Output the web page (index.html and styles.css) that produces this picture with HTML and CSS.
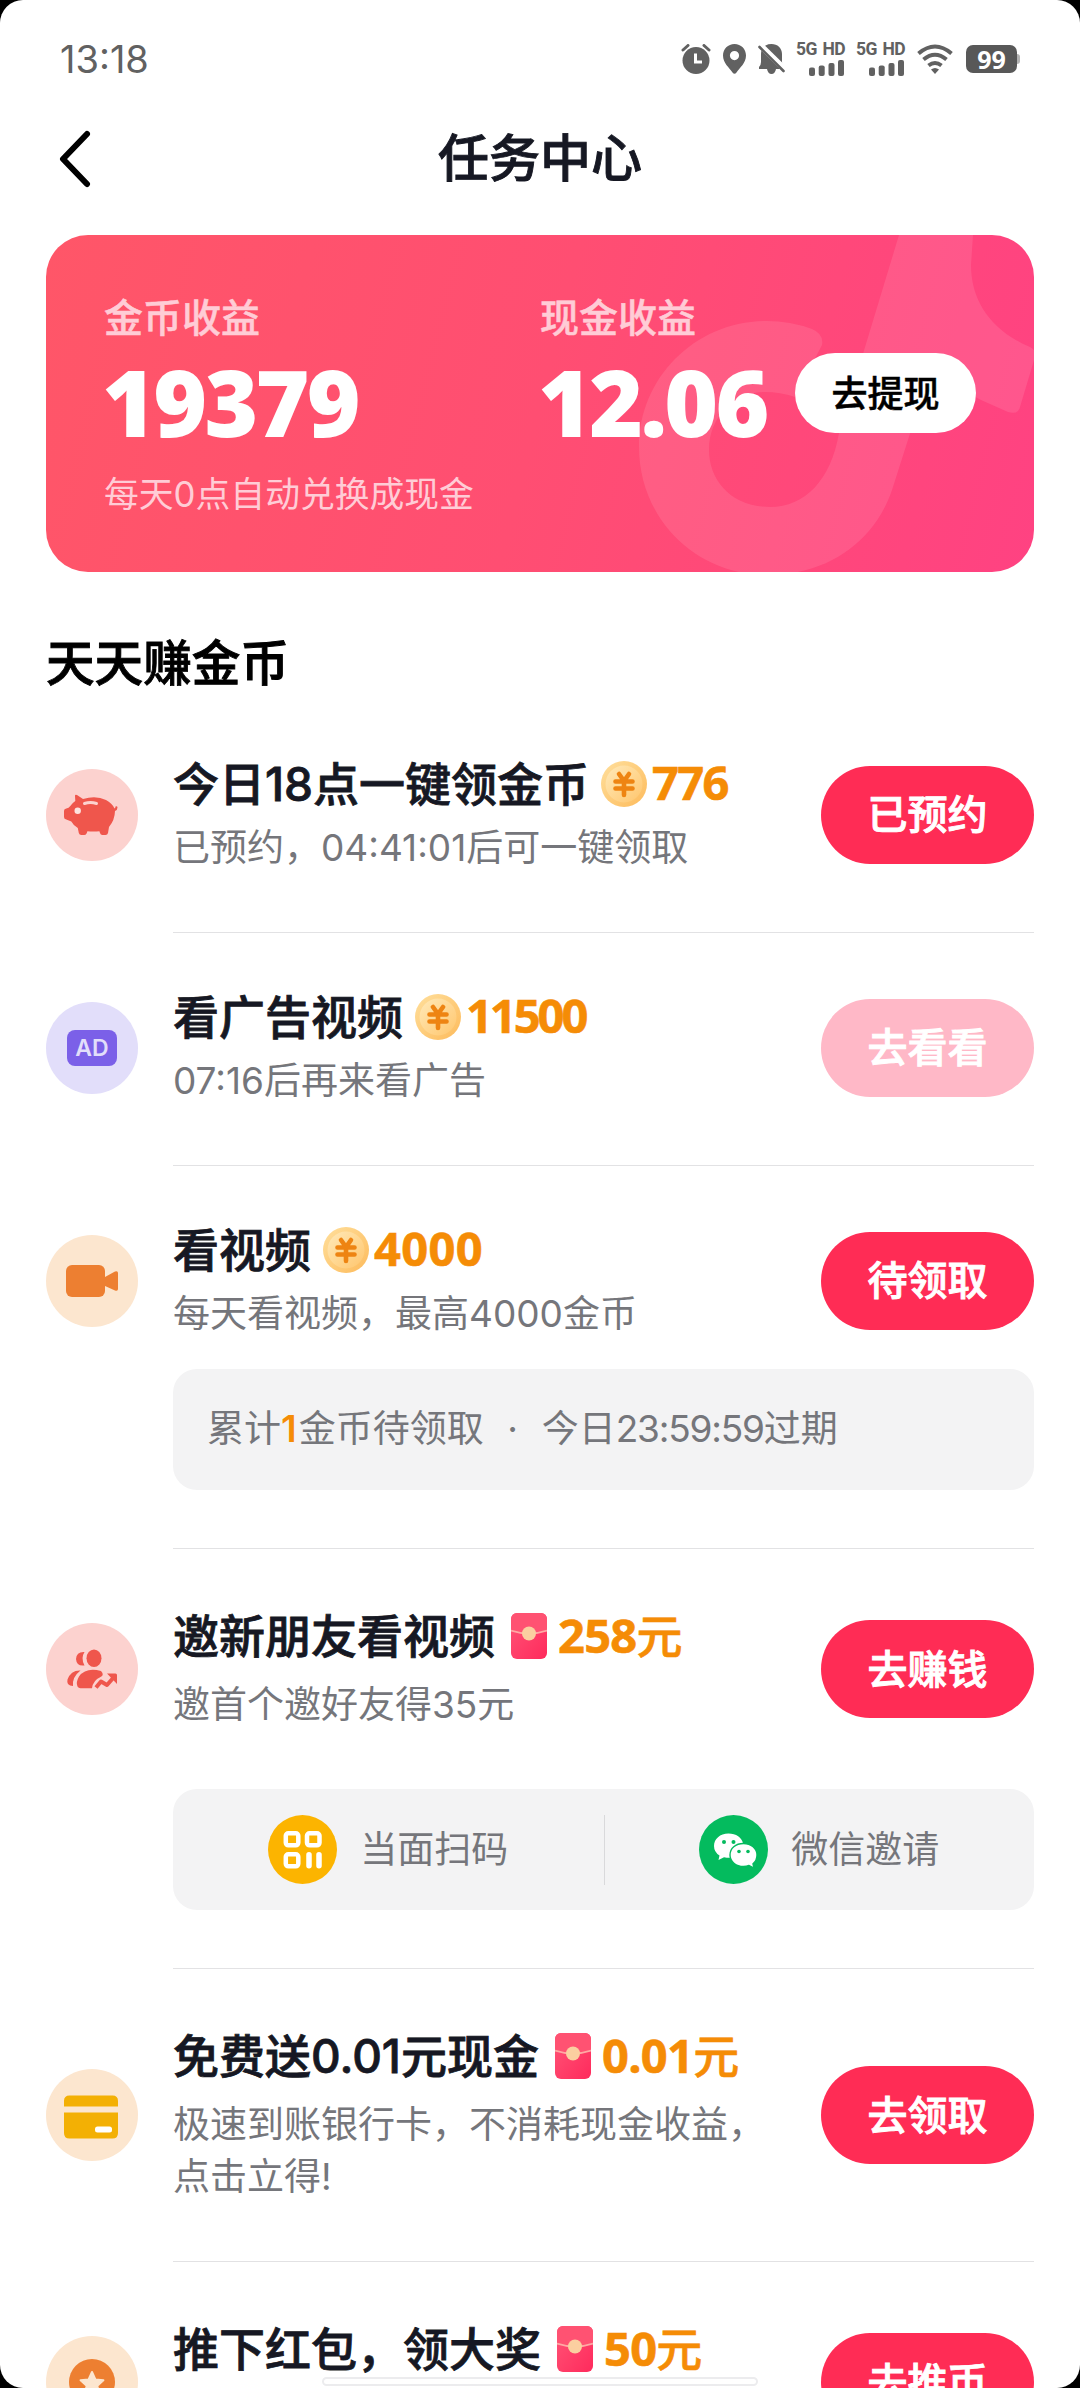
FILE: index.html
```html
<!DOCTYPE html>
<html lang="zh-CN">
<head>
<meta charset="utf-8">
<title>任务中心</title>
<link rel="stylesheet" href="styles.css">
</head>
<body>
<svg class="defs" width="0" height="0" aria-hidden="true">
  <defs>
    <linearGradient id="coinRim" x1="0" y1="0" x2="1" y2="1"><stop offset="0" stop-color="#ffdf9c"/><stop offset="1" stop-color="#fdbb5c"/></linearGradient>
    <linearGradient id="coinFace" x1="0" y1="0" x2="1" y2="1"><stop offset="0" stop-color="#ffe9b8"/><stop offset="1" stop-color="#ffc66d"/></linearGradient>
    <linearGradient id="packetBody" x1="0" y1="0" x2="1" y2="1"><stop offset="0" stop-color="#ff5577"/><stop offset="1" stop-color="#ff2a5c"/></linearGradient>
  </defs>
  <symbol id="coin" viewBox="0 0 46 46">
    <circle cx="23" cy="23" r="23" fill="url(#coinRim)"/>
    <circle cx="23" cy="23" r="18.500" fill="url(#coinFace)"/>
    <path d="M18 13l5 7 5-7M14.500 20.500h17M14.500 27.500h17M23 20v14" fill="none" stroke="#ee8412" stroke-width="4.600" stroke-linecap="round" stroke-linejoin="round"/>
  </symbol>
  <symbol id="packet" viewBox="0 0 36 46">
    <rect width="36" height="46" rx="6" fill="url(#packetBody)"/>
    <path d="M0 17Q18 24 36 17V6a6 6 0 0 0-6-6H6a6 6 0 0 0-6 6z" fill="#ff5272"/>
    <path d="M0 17.500Q18 23.500 36 17.500" fill="none" stroke="#ffa9a4" stroke-width="1.800"/>
    <circle cx="18" cy="20.500" r="7" fill="#fbcfa0"/>
  </symbol>
  <symbol id="signal" viewBox="0 0 36 16">
    <rect y="7.500" width="6" height="8.500" rx="2"/><rect x="9.700" y="5.500" width="6" height="10.500" rx="2"/><rect x="19.500" y="3" width="6" height="13" rx="2"/><rect x="29" width="6" height="16" rx="2"/>
  </symbol>
</svg>

<div class="screen">
  <div class="statusbar">
    <span class="clock">13:18</span>
    <div class="indicators">
      <svg class="ind-alarm" width="30" height="30" viewBox="0 0 30 30"><circle cx="15" cy="16.500" r="13.500" fill="#616161"/><path d="M2 6l5-4.500M28 6l-5-4.500" stroke="#616161" stroke-width="3" stroke-linecap="round"/><path d="M14.500 9.500v8.500h6.500" fill="none" stroke="#fff" stroke-width="3"/></svg>
      <svg class="ind-pin" width="23" height="30" viewBox="0 0 23 30"><path fill="#616161" fill-rule="evenodd" d="M11.500 0C5 0 0 5 0 11.500 0 19 6.500 24 9.500 28.500q2 2.600 4 0C16.500 24 23 19 23 11.500 23 5 18 0 11.500 0zm0 7a4.600 4.600 0 1 1 0 9.200 4.600 4.600 0 0 1 0-9.200z"/></svg>
      <svg class="ind-bell" width="27" height="30" viewBox="0 0 27 30"><path fill="#616161" d="M13.500 0C19.500 0 24 4 24 10v8q0 3 2 5v2H18q-1 5-4.500 5T9 25H1v-2q2-2 2-5v-8C3 4 7 0 13.500 0z"/><path d="M1 0l27 26.500" stroke="#fff" stroke-width="6"/><path d="M1.500 3l24 24" stroke="#616161" stroke-width="2.600" stroke-linecap="round"/></svg>
      <div class="network"><span>5G HD</span><svg width="36" height="16" fill="#616161"><use href="#signal"/></svg></div>
      <div class="network"><span>5G HD</span><svg width="36" height="16" fill="#616161"><use href="#signal"/></svg></div>
      <svg class="ind-wifi" width="36" height="30" viewBox="0 0 36 30"><g fill="none" stroke="#616161" stroke-width="4"><path d="M1.500 9.500q16.500-14 33 0"/><path d="M6.500 15.500q11.500-9.500 23 0"/><path d="M11.500 21.500q6.500-5 13 0"/></g><path fill="#616161" d="M14 25.500q4-3 8 0L18 30z"/></svg>
      <div class="battery">99</div>
    </div>
  </div>

  <header class="navbar">
    <svg class="back" width="32" height="58" viewBox="0 0 32 58"><path d="M28 4L4 29l24 25" fill="none" stroke="#000" stroke-width="6" stroke-linecap="round" stroke-linejoin="round"/></svg>
    <h1>任务中心</h1>
  </header>

  <section class="wallet">
    <svg class="watermark" viewBox="46 235 988 337"><path fill="#fff" fill-opacity=".1" d="M899 235L839 433C831 480 805 507 770 507 731 507 709 480 709 450 709 416 735 392 765 392Q780 392 795 397L822 345Q824 334 812 329 790 321 767 321C695 321 639 378 639 447 639 518 695 575 767 575 830 575 875 540 892 490L935 355Q950 385 981 400L1008 412Q1018 415 1020 407L1035 357Q1037 351 1030 347C990 330 971 300 971 265L973 235z"/></svg>
    <div class="balance coins">
      <span class="label">金币收益</span>
      <strong>19379</strong>
      <span class="hint">每天0点自动兑换成现金</span>
    </div>
    <div class="balance cash">
      <span class="label">现金收益</span>
      <strong>12.06</strong>
    </div>
    <button class="withdraw">去提现</button>
  </section>

  <h2>天天赚金币</h2>

  <main class="tasks">
    <article class="task">
      <svg class="icon" viewBox="0 0 92 92"><circle cx="46" cy="46" r="46" fill="#fcd2cf"/><path fill="#ef564c" d="M29 27q0-2 2-1l6 4q13-4 23 1 6 3 8.500 8.500 1-.5 1-2 1.800-.8 2 1 0 2.500-2.500 3.500-.2 9-6 16l-1 6q-.5 2-2.500 2h-3q-2 0-2.500-2l-.6-1.800q-6 .8-12 0l-.6 1.800q-.5 2-2.500 2h-3q-2 0-2.500-2l-1-5q-4-2-6.500-6.500l-5-2q-2.300-.5-2.300-2.500v-6q0-2.500 2.300-2.500 2.500-.5 4-2.500 2-3 5-5z"/><circle cx="31.700" cy="41.700" r="3.200" fill="#fde3df"/><path d="M38.500 34.500q6-2 12 0" fill="none" stroke="#fcd2cf" stroke-width="3" stroke-linecap="round"/></svg>
      <div class="info">
        <h3>今日18点一键领金币<svg class="coin"><use href="#coin"/></svg><b class="snug">776</b></h3>
        <p>已预约，04:41:01后可一键领取</p>
      </div>
      <button>已预约</button>
      <div class="rule"></div>
    </article>

    <article class="task">
      <div class="icon ad"><span>AD</span></div>
      <div class="info">
        <h3>看广告视频<svg class="coin"><use href="#coin"/></svg><b class="tight">11500</b></h3>
        <p>07:16后再来看广告</p>
      </div>
      <button class="muted">去看看</button>
      <div class="rule"></div>
    </article>

    <article class="task">
      <svg class="icon" viewBox="0 0 92 92"><circle cx="46" cy="46" r="46" fill="#fce6cf"/><rect x="20" y="30" width="39" height="32" rx="6" fill="#ed7f31"/><path fill="#ed7f31" d="M59 42l10-5.500q3-1 3 1.500v16q0 2.500-3 1.500L59 51z"/></svg>
      <div class="info">
        <h3>看视频<svg class="coin"><use href="#coin"/></svg><b class="wide">4000</b></h3>
        <p>每天看视频，最高4000金币</p>
      </div>
      <button>待领取</button>
      <div class="panel notice">累计<em>1</em>金币待领取<i>·</i>今日<span>23:59:59</span>过期</div>
      <div class="rule"></div>
    </article>

    <article class="task roomy">
      <svg class="icon" viewBox="0 0 92 92"><circle cx="46" cy="46" r="46" fill="#fcd2cf"/><g fill="#ef564c"><ellipse cx="48" cy="35.300" rx="7.500" ry="8.800"/><path d="M38.500 29q-4 6 0 13.500Q30.500 43.500 30 36 30.500 28.500 38.500 29z"/><path d="M34.500 47.500Q25 47 21.500 56.500q-1.500 6.500 5.500 6.500-1-9 7.500-15.500z"/><path d="M55 48Q40 44 33 53.500q-3.500 6-1.500 10 1 1.800 3 1.800H46q1-8 9-11.500 3.500-2 0-5.800z"/><path d="M50 64.500l5-6 6 3.500 7-8" fill="none" stroke="#ef564c" stroke-width="4" stroke-linejoin="round"/><path d="M61 50.500h8.500q1.500 0 1.500 1.500v9z"/></g></svg>
      <div class="info">
        <h3>邀新朋友看视频<svg class="packet"><use href="#packet"/></svg><b>258<span>元</span></b></h3>
        <p>邀首个邀好友得35元</p>
      </div>
      <button>去赚钱</button>
      <div class="panel share">
        <a><svg viewBox="0 0 69 69"><circle cx="34.500" cy="34.500" r="34.500" fill="#fcb400"/><g fill="none" stroke="#fff" stroke-width="4.500"><rect x="17.800" y="18.300" width="12.500" height="12" rx="2.500"/><rect x="39" y="18.300" width="12.500" height="12" rx="2.500"/><rect x="17.800" y="39.300" width="12.500" height="12" rx="2.500"/></g><path d="M41 39.800v11M51 39.800v11" stroke="#fff" stroke-width="5.500" stroke-linecap="round"/></svg>当面扫码</a>
        <a><svg viewBox="0 0 69 69"><circle cx="34.500" cy="34.500" r="34.500" fill="#04bb5e"/><path fill="#fff" d="M29.500 18.500C21 18.500 15 24 15 31q0 6 5.500 9.500L19.500 45l5.500-2.800q5 1.200 9.500.2L44 28.500c-1-6-7-10-14.500-10z"/><path fill="#fff" stroke="#04bb5e" stroke-width="1.400" d="M44.500 28.500C36.500 28.500 31 33.500 31 40s6 11.500 13.500 11.500q3 0 5.500-1l5 2.700-1-4.300q4-3.500 4-8.900C58 33.500 52 28.500 44.500 28.500z"/><g fill="#04bb5e"><circle cx="25" cy="27" r="2"/><circle cx="34.500" cy="27" r="2"/><circle cx="40" cy="36.500" r="1.800"/><circle cx="49" cy="36.500" r="1.800"/></g></svg>微信邀请</a>
      </div>
      <div class="rule"></div>
    </article>

    <article class="task roomy">
      <svg class="icon" viewBox="0 0 92 92"><circle cx="46" cy="46" r="46" fill="#fce6cf"/><path fill="#f3b004" d="M18 37.500V32q0-5.500 5.500-5.500h43Q72 26.500 72 32v5.500zM18 43.500h54V64q0 5.500-5.500 5.500h-43Q18 69.500 18 64z"/><rect x="49" y="57.500" width="17" height="6" rx="2.500" fill="#fff"/></svg>
      <div class="info">
        <h3>免费送0.01元现金<svg class="packet"><use href="#packet"/></svg><b>0.01<span>元</span></b></h3>
        <p>极速到账银行卡，不消耗现金收益，点击立得!</p>
      </div>
      <button>去领取</button>
      <div class="rule"></div>
    </article>

    <article class="task roomy">
      <svg class="icon" viewBox="0 0 92 92"><circle cx="46" cy="46" r="46" fill="#fce6cf"/><circle cx="46" cy="46" r="23" fill="#ed7f31"/><path fill="#fce6cf" stroke="#fce6cf" stroke-width="2" stroke-linejoin="round" d="M46 36l3.400 7.400 8 .9-6 5.500 1.700 8L46 53.800l-7.100 4 1.700-8-6-5.500 8-.9z"/></svg>
      <div class="info">
        <h3>推下红包，领大奖<svg class="packet"><use href="#packet"/></svg><b>50<span>元</span></b></h3>
      </div>
      <button>去推币</button>
    </article>
  </main>
  <div class="home-indicator"></div>
</div>
</body>
</html>
```
FILE: styles.css
```css
* { box-sizing: border-box; margin: 0; padding: 0; }
body { background: #000; font-family: Inter, "Noto Sans CJK SC", sans-serif; }
button { border: 0; font-family: inherit; }
svg { display: block; flex: none; }
.defs { position: absolute; }

.screen {
  position: relative;
  width: 1080px;
  height: 2388px;
  padding: 0 46px;
  overflow: hidden;
  background: #fff;
  border-radius: 23px;
}

/* Status bar */
.statusbar {
  display: flex;
  justify-content: space-between;
  align-items: center;
  height: 118px;
  padding: 0 14px;
  color: #616161;
}
.clock { font-size: 38px; line-height: 44px; }
.indicators { display: flex; align-items: center; gap: 12px; }
.network { display: flex; flex-direction: column; align-items: flex-end; gap: 3px; width: 48px; }
.network span {
  font: 700 17.5px/15px Roboto, sans-serif;
  letter-spacing: -0.6px;
  word-spacing: 2px;
  white-space: nowrap;
}
.ind-wifi { margin-right: 1px; }
.battery {
  position: relative;
  width: 51px;
  height: 28px;
  margin-right: 3px;
  border-radius: 7px;
  background: #585858;
  color: #fff;
  font: 700 25px/28px "Open Sans", sans-serif;
  text-align: center;
}
.battery::after {
  content: "";
  position: absolute;
  left: 51px;
  top: 9px;
  width: 3px;
  height: 10px;
  border-radius: 0 3px 3px 0;
  background: #b3b3b3;
}

/* Title bar */
.navbar {
  display: grid;
  grid-template-columns: 60px 1fr 60px;
  align-items: center;
  height: 82px;
}
.back { margin-left: 13px; }
.navbar h1 {
  color: #161823;
  font-size: 51px;
  font-weight: 500;
  line-height: 82px;
  text-align: center;
  -webkit-text-stroke: 0.9px currentColor;
}

/* Balance card */
.wallet {
  position: relative;
  display: flex;
  height: 337px;
  margin-top: 35px;
  padding: 56px 58px 0 58px;
  overflow: hidden;
  border-radius: 42px;
  background: linear-gradient(104deg, #ff5668 0%, #ff4e72 50%, #ff4282 100%);
  color: #fff;
}
.watermark { position: absolute; left: 0; top: 0; width: 100%; height: 100%; }
.balance { position: relative; display: flex; flex-direction: column; }
.coins { width: 436px; }
.balance .label {
  color: #ffccd6;
  font-size: 39px;
  font-weight: 500;
  line-height: 54px;
  -webkit-text-stroke: 0.5px currentColor;
}
.balance strong {
  margin: 9px 0 0 -2px;
  font: 800 92px/96px "Open Sans", sans-serif;
  letter-spacing: -2.7px;
}
.balance .hint { margin-top: 19px; color: #ffccd6; font-size: 34.8px; line-height: 50px; }
.withdraw {
  position: relative;
  width: 181px;
  height: 80px;
  margin: 62px 0 0 auto;
  padding-bottom: 4px;
  border-radius: 40px;
  background: #fff;
  color: #000;
  font-size: 36px;
  font-weight: 500;
  -webkit-text-stroke: 0.5px currentColor;
}

h2 {
  margin-top: 61px;
  font-size: 48.6px;
  font-weight: 500;
  line-height: 62px;
  color: #000;
  -webkit-text-stroke: 0.9px currentColor;
}

/* Task list */
.tasks { margin-top: 5px; }
.task {
  display: grid;
  grid-template-columns: 92px 1fr 213px;
  column-gap: 35px;
  align-items: center;
  padding-top: 55px;
}
.icon { width: 92px; height: 92px; }
.ad { display: grid; place-items: center; border-radius: 50%; background: #e2defa; }
.ad span {
  width: 50px;
  height: 36px;
  border-radius: 8px;
  background: #7b60e8;
  color: #e2defa;
  font-size: 23px;
  font-weight: 600;
  line-height: 36px;
  text-align: center;
}
.info { padding-right: 10px; }
.info h3 {
  display: flex;
  align-items: center;
  height: 58px;
  color: #161823;
  font-size: 46px;
  font-weight: 500;
  line-height: 58px;
  white-space: nowrap;
  -webkit-text-stroke: 0.8px currentColor;
}
.info p { margin-top: 9px; color: #75767b; font-size: 37px; line-height: 52px; }
.coin { width: 46px; height: 46px; margin: 0 5px 0 12px; -webkit-text-stroke: 0; }
.packet { width: 36px; height: 46px; margin: 0 11px 0 16px; }
.info b {
  margin-bottom: 4px;
  color: #f58c06;
  font: 700 47px/58px "Open Sans", sans-serif;
  letter-spacing: -0.7px;
  -webkit-text-stroke: 0.6px currentColor;
}
.info b.tight { letter-spacing: -3px; }
.info b.snug { letter-spacing: -1.6px; }
.info b.wide { letter-spacing: 0.4px; }
.info b span { font: 500 46px/58px "Noto Sans CJK SC", sans-serif; }
.task button {
  height: 98px;
  padding-bottom: 5px;
  border-radius: 49px;
  background: #ff2c55;
  color: #fff;
  font-size: 40px;
  font-weight: 500;
  -webkit-text-stroke: 0.9px currentColor;
}
.task button.muted { background: #ffb8c7; }
.panel {
  grid-column: 2 / -1;
  height: 121px;
  margin-top: 29px;
  border-radius: 24px;
  background: #f3f3f4;
  color: #75767b;
  font-size: 37px;
}
.notice { padding-left: 34px; line-height: 119px; white-space: nowrap; }
.notice em { color: #f58c06; font-style: normal; font-weight: 600; letter-spacing: 2px; }
.notice i { display: inline-block; width: 58px; font-style: normal; text-align: center; }
.notice span { letter-spacing: -1.2px; }
.rule { grid-column: 2 / -1; height: 1px; margin-top: 58px; background: #e2e2e4; }

.roomy { padding-top: 58px; }
.roomy .info { min-height: 124px; }
.roomy .info p { margin-top: 14px; }
.share { display: grid; grid-template-columns: 1fr 1fr; align-items: center; margin-top: 58px; }
.share a { display: flex; justify-content: center; align-items: center; gap: 23px; height: 70px; line-height: 70px; }
.share a + a { border-left: 1px solid #d9d9db; }
.share svg { width: 69px; height: 69px; }

.home-indicator {
  position: absolute;
  left: 322px;
  top: 2377px;
  width: 436px;
  height: 9px;
  border: 2px solid #ececee;
  border-radius: 5px;
  background: #fff;
}
```
